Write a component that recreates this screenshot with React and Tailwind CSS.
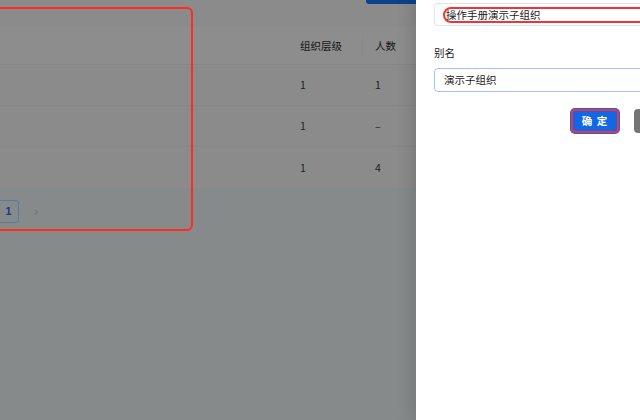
export default function App() {
  const font = { fontFamily: '"Noto Sans CJK SC", "Noto Sans", sans-serif' };
  const rows = [
    ["1", "1"],
    ["1", "–"],
    ["1", "4"],
  ];
  return (
    <div className="flex h-[420px] w-[640px] overflow-hidden text-[10.5px]" style={font}>
      {/* masked main page */}
      <div className="relative flex w-[416px] shrink-0 flex-col bg-[#878a8b]">
        <div className="flex flex-col bg-[#8b8b8b]">
          <div className="flex h-[27px] justify-end">
            <div className="h-[4px] w-[50px] rounded-bl-[3px] bg-[#0c418c]" />
          </div>
          <div className="flex h-[38px] items-center border-b border-[#868686] bg-[#8d8d8d] text-[#161616]">
            <div className="w-[288px]" />
            <div className="flex h-[20px] w-[75px] items-center border-r border-[#898989] pl-[12px]">组织层级</div>
            <div className="pl-[12px]">人数</div>
          </div>
          {rows.map((r, i) => (
            <div
              key={i}
              className={`flex h-[41px] items-center text-[#222] ${i < 2 ? "border-b border-[#878787]" : ""}`}
            >
              <div className="w-[288px]" />
              <div className="w-[75px] pl-[12px]">{r[0]}</div>
              <div className="pl-[12px]">{r[1]}</div>
            </div>
          ))}
        </div>
        <div className="flex items-center pt-[12px]">
          <div className="ml-[-2px] flex h-[23px] w-[21px] items-center justify-center rounded-[3px] border border-[#5b7aa1] font-semibold text-[#0c3f87]" style={{ fontFamily: '"Liberation Sans", sans-serif' }}>
            1
          </div>
          <div className="ml-[15px] text-[12px] text-[#6f7274]" style={{ fontFamily: '"DejaVu Sans", sans-serif' }}>›</div>
        </div>
        {/* annotation outline */}
        <div className="pointer-events-none absolute left-[-10px] top-[7px] h-[224px] w-[203px] rounded-[6px] border-2 border-[#ff2d20]" />
      </div>

      {/* drawer */}
      <div className="relative flex flex-1 flex-col bg-white pl-[18px] shadow-[-6px_0_14px_rgba(0,0,0,0.12)]">
        <div className="mt-[3px] flex h-[23px] w-[230px] shrink-0 items-center rounded-l-[4px] border border-[#e3e3e3] pl-[8px]">
          <div className="flex h-[16px] flex-1 items-center rounded-l-[8px] border-2 border-[#f0333a] pl-[1px] text-[#1a1a1a]">
            操作手册演示子组织
          </div>
        </div>
        <div className="mt-[19px] text-[#1a1a1a]">别名</div>
        <div className="mt-[7px] flex h-[24px] w-[230px] shrink-0 items-center rounded-l-[4px] border border-[#9cc4f5] pl-[9px] text-[#1a1a1a]">
          演示子组织
        </div>
        <div className="mt-[17px] flex w-[230px] shrink-0 justify-end gap-[15px]">
          <div className="flex h-[24px] w-[48px] items-center justify-center rounded-[4px] border-2 border-[#f0333a] bg-[#1167e6] font-semibold tracking-[1px] text-white shadow-[0_0_0_1px_#1167e6]">
            确 定
          </div>
          <div className="h-[24px] w-[30px] rounded-[4px] bg-[#757575]" />
        </div>
      </div>
    </div>
  );
}
